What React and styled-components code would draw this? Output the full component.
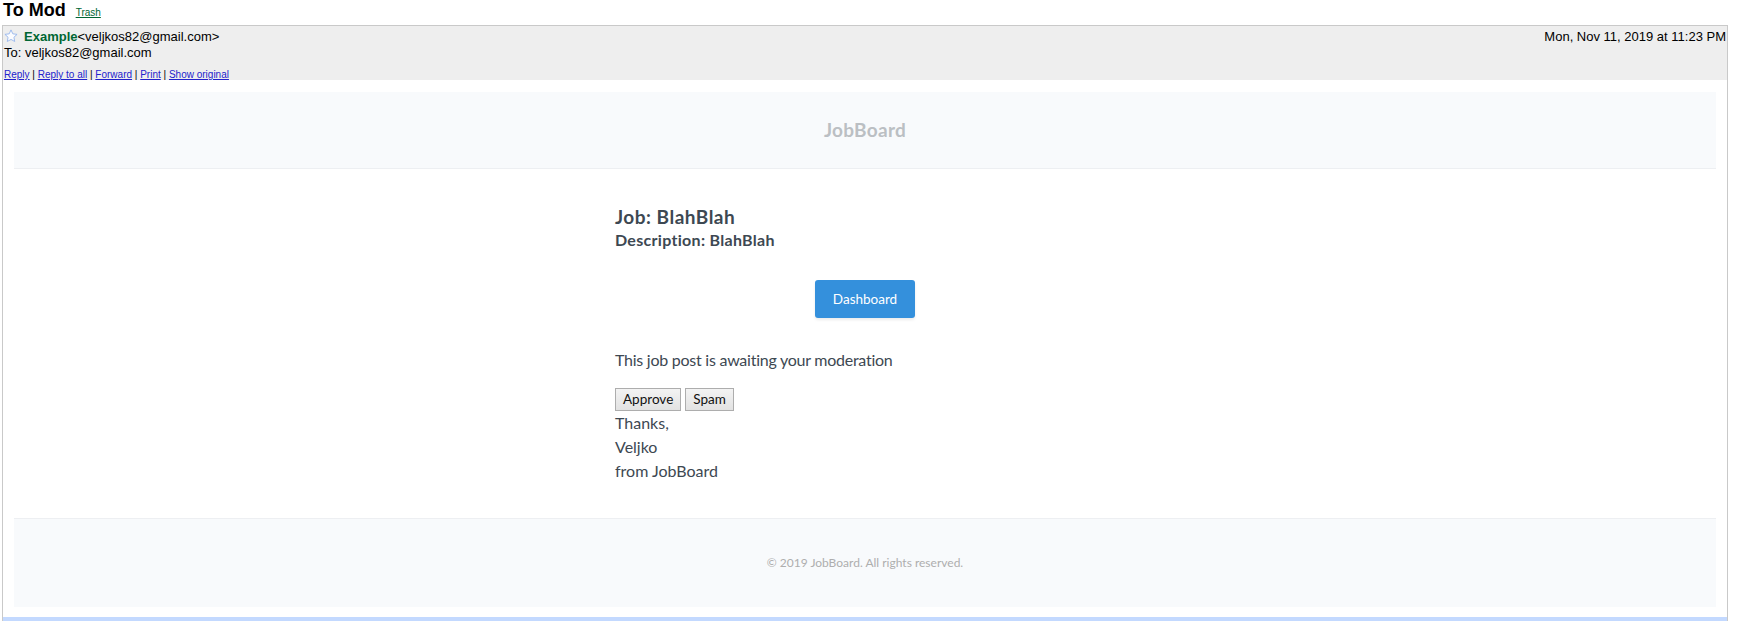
import React from "react";
import styled, { createGlobalStyle } from "styled-components";

const GlobalStyle = createGlobalStyle`
  html, body { margin: 0; padding: 0; background: #fff; }
  body { font-family: "Liberation Sans", Arial, sans-serif; }
`;

const mailFont = `Lato, "Open Sans", "Noto Sans", sans-serif`;

const Page = styled.div`
  margin: 0 11px 0 2px;
`;

const TitleRow = styled.div`
  display: flex;
  align-items: baseline;
  gap: 10px;
  height: 25px;
  padding-left: 1px;
  box-sizing: border-box;
`;

const Title = styled.span`
  font-family: "Liberation Sans", Arial, sans-serif;
  font-size: 18px;
  font-weight: bold;
  color: #000;
  line-height: 20px;
`;

const TrashLink = styled.a`
  font-family: "Liberation Sans", Arial, sans-serif;
  font-size: 10px;
  color: #006633;
  text-decoration: underline;
`;

const MessageBox = styled.div`
  border: 1px solid #c9c9c9;
  border-bottom: none;
`;

const MessageHeader = styled.div`
  background: #eeeeee;
  padding: 3px 1px 0 1px;
  font-family: "Liberation Sans", Arial, sans-serif;
  font-size: 13px;
  color: #000;
`;

const HeaderLine = styled.div`
  display: flex;
  justify-content: space-between;
  height: 16px;
  line-height: 16px;
  white-space: nowrap;
`;

const Star = styled.svg`
  width: 14px;
  height: 14px;
  vertical-align: -2px;
  margin-right: 6px;
`;

const SenderName = styled.b`
  color: #006633;
`;

const Actions = styled.div`
  margin-top: 8px;
  font-size: 10px;
  line-height: 11px;
  height: 11px;
  color: #000;
`;

const ActionLink = styled.a`
  color: #2222cc;
  text-decoration: underline;
`;

const MessageBody = styled.div`
  padding: 12px 11px 10px 11px;
`;

const Wrapper = styled.div`
  background: #f8fafc;
  font-family: ${mailFont};
  color: #3d4852;
`;

const MailHeader = styled.div`
  padding: 25px 0;
  text-align: center;
  font-size: 19px;
  line-height: 26px;
  height: 26px;
`;

const Brand = styled.a`
  color: #bbbfc3;
  font-size: 19px;
  font-weight: bold;
  letter-spacing: 0.3px;
  text-decoration: none;
`;

const MailBody = styled.div`
  background: #fff;
  border-top: 1px solid #edeff2;
  border-bottom: 1px solid #edeff2;
`;

const InnerBody = styled.div`
  width: 570px;
  margin: 0 auto;
  padding: 35px;
  box-sizing: border-box;
`;

const JobTitle = styled.h1`
  margin: 0;
  font-size: 19px;
  font-weight: bold;
  line-height: 25px;
  letter-spacing: 0.5px;
  color: #3d4852;
`;

const JobDescription = styled.h2`
  margin: 0;
  font-size: 16px;
  font-weight: bold;
  line-height: 21px;
  letter-spacing: 0.3px;
  color: #3d4852;
`;

const ActionRow = styled.div`
  display: flex;
  justify-content: center;
  margin: 30px 0;
`;

const PrimaryButton = styled.a`
  display: inline-block;
  box-sizing: border-box;
  height: 38px;
  padding: 0 18px;
  background: #3490dc;
  border-radius: 3px;
  color: #fff;
  font-size: 13.5px;
  line-height: 38px;
  text-decoration: none;
  box-shadow: 0 2px 3px rgba(0, 0, 0, 0.08);
`;

const Paragraph = styled.p`
  margin: 0 0 16px;
  font-size: 16px;
  line-height: 24px;
  letter-spacing: -0.25px;
`;

const ModerationRow = styled.div`
  display: flex;
  gap: 4px;
  height: 23px;
`;

const ModButton = styled.button`
  box-sizing: border-box;
  height: 23px;
  padding: 0 7px;
  border: 1px solid #adadad;
  border-radius: 0;
  background: linear-gradient(#f3f3f3, #e2e2e2);
  color: #111;
  font-family: ${mailFont};
  font-size: 13.5px;
  line-height: 21px;
  cursor: pointer;
`;

const Signoff = styled.div`
  font-size: 16px;
  line-height: 24px;
`;

const MailFooter = styled.div`
  width: 570px;
  margin: 0 auto;
  padding: 35px;
  box-sizing: border-box;
  text-align: center;
  color: #aeaeae;
  font-size: 12px;
  line-height: 18px;
`;

const BottomBar = styled.div`
  height: 6px;
  background: #c3d9ff;
`;

function StarIcon() {
  return (
    <Star viewBox="0 0 24 24" aria-hidden="true">
      <path
        d="M12 1.6l3.1 6.7 7.3.9-5.4 5 1.4 7.2L12 17.9l-6.4 3.5 1.4-7.2-5.4-5 7.3-.9z"
        fill="#fbfcff"
        stroke="#93b4ec"
        strokeWidth="1.5"
        strokeLinejoin="round"
      />
    </Star>
  );
}

export default function App() {
  const actions = ["Reply", "Reply to all", "Forward", "Print", "Show original"];
  return (
    <>
      <GlobalStyle />
      <Page>
        <TitleRow>
          <Title>To Mod</Title>
          <TrashLink href="#">Trash</TrashLink>
        </TitleRow>
        <MessageBox>
          <MessageHeader>
            <HeaderLine>
              <span>
                <StarIcon />
                <SenderName>Example</SenderName>&lt;veljkos82@gmail.com&gt;
              </span>
              <span>Mon, Nov 11, 2019 at 11:23 PM</span>
            </HeaderLine>
            <HeaderLine>To: veljkos82@gmail.com</HeaderLine>
            <Actions>
              {actions.map((a, i) => (
                <React.Fragment key={a}>
                  {i > 0 && " | "}
                  <ActionLink href="#">{a}</ActionLink>
                </React.Fragment>
              ))}
            </Actions>
          </MessageHeader>
          <MessageBody>
            <Wrapper>
              <MailHeader>
                <Brand href="#">JobBoard</Brand>
              </MailHeader>
              <MailBody>
                <InnerBody>
                  <JobTitle>Job: BlahBlah</JobTitle>
                  <JobDescription>Description: BlahBlah</JobDescription>
                  <ActionRow>
                    <PrimaryButton href="#">Dashboard</PrimaryButton>
                  </ActionRow>
                  <Paragraph>This job post is awaiting your moderation</Paragraph>
                  <ModerationRow>
                    <ModButton type="button">Approve</ModButton>
                    <ModButton type="button">Spam</ModButton>
                  </ModerationRow>
                  <Signoff>Thanks,</Signoff>
                  <Signoff>Veljko</Signoff>
                  <Signoff>from JobBoard</Signoff>
                </InnerBody>
              </MailBody>
              <MailFooter>© 2019 JobBoard. All rights reserved.</MailFooter>
            </Wrapper>
          </MessageBody>
          <BottomBar />
        </MessageBox>
      </Page>
    </>
  );
}
